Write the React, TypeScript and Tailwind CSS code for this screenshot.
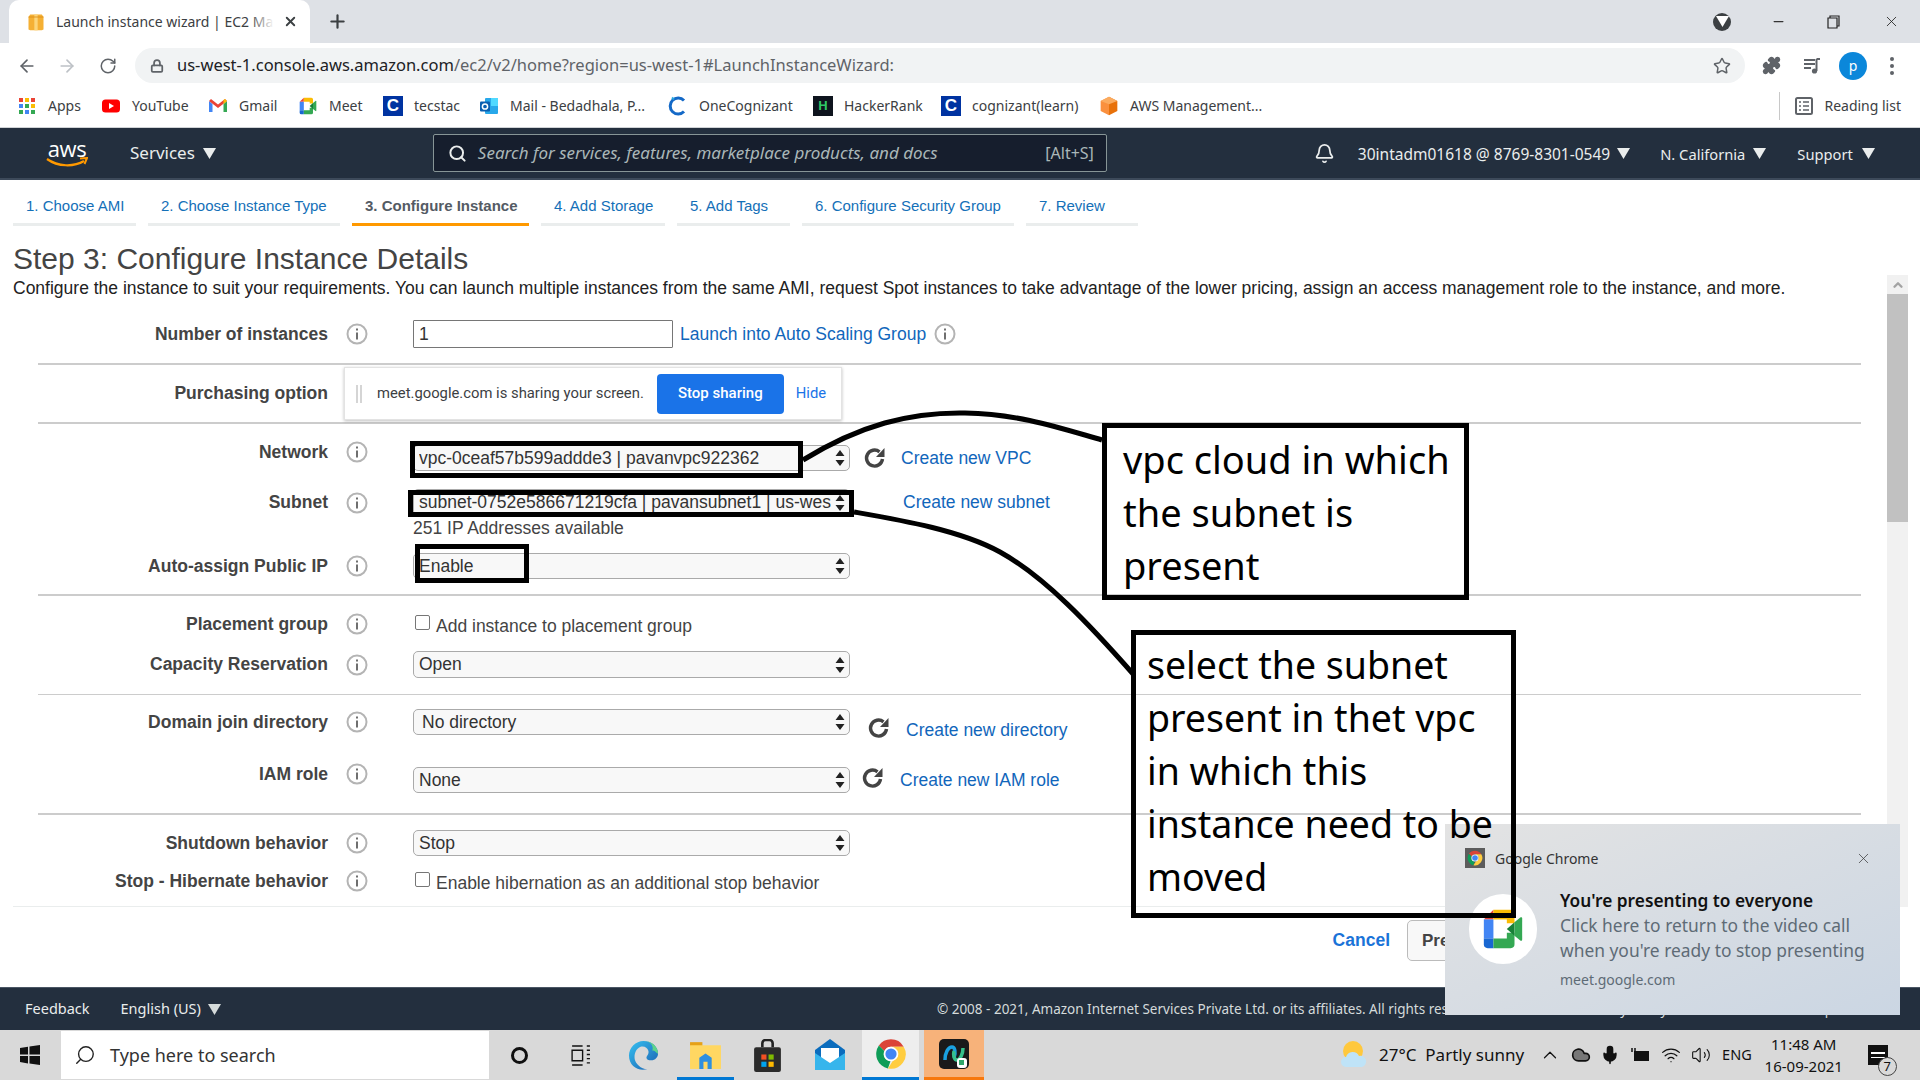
import React from 'react';
import { ArrowLeft, ArrowRight, ChevronUp, Lock, Plus, RotateCw, Search, Star, Puzzle, X, Bell, Mic, Volume2, Wifi, Cloud, Minus } from 'lucide-react';

const Tri = ({ className = '' }: { className?: string }) => (
  <svg viewBox="0 0 12 12" className={`w-[13px] h-[13px] shrink-0 ${className}`}>
    <path d="M0 1h12L6 11z" fill="currentColor" />
  </svg>
);

const ChromeLogo = ({ className = 'w-6 h-6' }: { className?: string }) => (
  <svg viewBox="0 0 24 24" className={className}>
    <path d="M12 1a11 11 0 0 1 9.5 5.5H12a5.5 5.5 0 0 0-5 3.2L2.9 5.7A11 11 0 0 1 12 1z" fill="#db4437" />
    <path d="M2.9 5.7 7 9.7a5.5 5.5 0 0 0 4.6 7.8l-1.9 5.3A11 11 0 0 1 2.9 5.7z" fill="#0f9d58" />
    <path d="M21.5 6.5A11 11 0 0 1 9.7 22.8l3.6-5.6A5.5 5.5 0 0 0 16.8 9.3l-4.8-2.8z" fill="#ffcd40" />
    <circle cx="12" cy="12" r="5.4" fill="#fff" />
    <circle cx="12" cy="12" r="4.2" fill="#4285f4" />
  </svg>
);

const MeetLogo = ({ className = 'w-5 h-5' }: { className?: string }) => (
  <svg viewBox="0 0 24 24" className={className}>
    <path d="M2 7 7 2v5z" fill="#ea4335" />
    <path d="M2 7h5v10H2z" fill="#4285f4" />
    <path d="M2 17h5v5H4a2 2 0 0 1-2-2z" fill="#1967d2" />
    <path d="M7 2h9a2 2 0 0 1 2 2v5l-4 0V7H7z" fill="#fbbc04" />
    <path d="M7 17h7v-3h4v6a2 2 0 0 1-2 2H7z" fill="#34a853" />
    <path d="m14 12 4-3.5v7z" fill="#188038" />
    <path d="m18 8.5 3-2.5c.6-.4 1-.1 1 .5v11c0 .6-.4.9-1 .5l-3-2.5z" fill="#34a853" />
  </svg>
);

const CBox = () => (
  <span className="w-5 h-5 bg-[#0033a1] flex items-center justify-center text-white font-bold text-[17px] leading-none font-['Liberation_Sans',sans-serif]">C</span>
);

const AwsCube = () => (
  <svg viewBox="0 0 24 24" className="w-5 h-5">
    <path d="M12 1 22 6v12l-10 5z" fill="#e8710a" />
    <path d="M12 1 2 6v12l10 5V10z" fill="#fa903e" />
    <path d="M2 6l10 4 10-4-10-5z" fill="#fbab5f" />
  </svg>
);

const Bookmark = ({ icon, text, w }: { icon: React.ReactNode; text: string; w: string }) => (
  <div className={`flex items-center gap-[11px] shrink-0 ${w}`}>
    <span className="w-5 h-5 flex items-center justify-center">{icon}</span>
    <span className="text-[14px] text-[#3c4043]">{text}</span>
  </div>
);

const Info = ({ className = '' }: { className?: string }) => (
  <svg viewBox="0 0 22 22" className={`w-[22px] h-[22px] shrink-0 ${className}`}>
    <circle cx="11" cy="11" r="9.5" fill="#fff" stroke="#b4b4b4" strokeWidth="2" />
    <rect x="10" y="9.5" width="2" height="7" fill="#6f6f6f" />
    <rect x="10" y="5.5" width="2" height="2" fill="#6f6f6f" />
  </svg>
);

const Select = ({ text, pad = 'pl-[5px]' }: { text: string; pad?: string }) => (
  <div className={`w-[437px] h-full shrink-0 flex items-center bg-[#f8f8f8] border border-[#aaaaaa] rounded-[5px] ${pad} pr-1 text-[17.500px] text-[#333] whitespace-nowrap`}>
    <span className="flex-1 overflow-hidden">{text}</span>
    <svg viewBox="0 0 10 16" className="w-[10px] h-4 shrink-0 ml-1">
      <path d="M5 0 9.5 6h-9zM5 16 .5 10h9z" fill="#222" />
    </svg>
  </div>
);

const Row = ({ label, h, mt, labelCls = '', children }: { label: string; h: string; mt: string; labelCls?: string; children: React.ReactNode }) => (
  <div className={`flex items-center ${h} ${mt}`}>
    <div className={`w-[290px] text-right font-bold text-[17.500px] text-[#444] shrink-0 ${labelCls}`}>{label}</div>
    <Info className={`ml-[18px] ${labelCls}`} />
    <div className="ml-[45px] flex items-center h-full">{children}</div>
  </div>
);

const Link = ({ children, className = '' }: { children: React.ReactNode; className?: string }) => (
  <span className={`text-[17.500px] text-[#1166bb] whitespace-nowrap ${className}`}>{children}</span>
);

const Refresh = ({ className = '' }: { className?: string }) => (
  <svg viewBox="0 0 24 24" className={`w-6 h-6 shrink-0 ${className}`}>
    <path d="M19.500 13a8 8 0 1 1-3-7.200" fill="none" stroke="#444" strokeWidth="3.400" />
    <path d="M21.500 2v9h-8.500z" fill="#444" />
  </svg>
);

const WizardTab = ({ text, w, active = false }: { text: string; w: string; active?: boolean }) => (
  <div className={`h-[46px] shrink-0 border-b-[3px] flex items-center pl-[13px] text-[15px] pt-[9px] ${w} ${active ? 'border-[#ff9900] text-[#545b64] font-bold' : 'border-[#eaeded] text-[#1470b8]'}`}>
    {text}
  </div>
);

const Checkbox = () => (
  <div className="ml-[2px] w-[15px] h-[15px] shrink-0 bg-white border border-[#767676] rounded-[2px] mb-[3px]" />
);

const App = () => {
  return (
    <div className="relative w-[1920px] h-[1080px] overflow-hidden bg-white flex flex-col font-['Liberation_Sans',Arial,sans-serif]">
      {/* Chrome tab strip */}
      <div className="h-[43px] shrink-0 bg-[#dee1e6] flex items-end font-['Noto_Sans',sans-serif]">
        <div className="ml-[9px] w-[301px] h-[43px] bg-white rounded-t-[10px] flex items-center pl-[17px] pr-3">
          <svg viewBox="0 0 24 24" className="w-[20px] h-[20px] shrink-0">
            <path d="M5 3h14l2 3v15l-2 1H5l-2-1V6z" fill="#f5b034" />
            <path d="M10 3h4v19h-4z" fill="#fcd57a" />
            <path d="M3 6h18" stroke="#d88d17" strokeWidth="1" />
          </svg>
          <span className="relative ml-[10px] w-[218px] whitespace-nowrap text-[14px] text-[#3c4043]">
            Launch instance wizard | EC2 Ma
            <span className="absolute right-0 top-0 w-[24px] h-full bg-gradient-to-r from-transparent to-white" />
          </span>
          <X size={15} strokeWidth={3} className="ml-auto text-[#3c4043]" />
        </div>
        <Plus size={21} strokeWidth={2.5} className="ml-[17px] mb-[11px] text-[#3c4043]" />
        <div className="ml-auto flex items-center h-[43px]">
          <div className="w-[18px] h-[18px] rounded-full bg-[#3c4043] text-white flex items-center justify-center mr-[40px]">
            <Tri className="w-[8px] h-[8px]" />
          </div>
          <Minus size={15} className="text-[#333] mr-[41px]" />
          <svg viewBox="0 0 14 14" className="w-[14px] h-[14px] mr-[42px]">
            <path d="M3 3V1h9v10h-2M1 3h9v10H1z" fill="none" stroke="#222" strokeWidth="1.2" />
          </svg>
          <X size={17} strokeWidth={1.2} className="text-[#222] mr-[20px]" />
        </div>
      </div>

      {/* Chrome toolbar */}
      <div className="h-[45px] shrink-0 bg-white flex items-center font-['Noto_Sans',sans-serif]">
        <ArrowLeft size={20} className="ml-[17px] text-[#5f6368]" />
        <ArrowRight size={20} className="ml-[20px] text-[#bdc1c6]" />
        <RotateCw size={18} className="ml-[22px] text-[#5f6368]" />
        <div className="ml-[18px] w-[1610px] h-[35px] rounded-full bg-[#f1f3f4] flex items-center pl-[15px] pr-[14px]">
          <Lock size={14} strokeWidth={3} className="text-[#5f6368]" />
          <span className="ml-[13px] text-[16.500px] text-[#202124]">us-west-1.console.aws.amazon.com<span className="text-[#5f6368]">/ec2/v2/home?region=us-west-1#LaunchInstanceWizard:</span></span>
          <Star size={18} className="ml-auto text-[#5f6368]" />
        </div>
        <Puzzle size={19} fill="#5f6368" className="ml-[17px] text-[#5f6368]" />
        <svg viewBox="0 0 20 20" className="w-5 h-5 ml-[21px]">
          <path d="M2 4h11M2 8h11M2 12h7" stroke="#5f6368" strokeWidth="2" />
          <path d="M14.5 3v12" stroke="#5f6368" strokeWidth="2" />
          <circle cx="12.5" cy="15" r="2.6" fill="#5f6368" />
          <path d="M14.5 3H18" stroke="#5f6368" strokeWidth="2" />
        </svg>
        <div className="ml-[17px] w-[28px] h-[28px] rounded-full bg-[#0b87da] text-white text-[14px] flex items-center justify-center">p</div>
        <div className="ml-[23px] flex flex-col gap-[3px]">
          <span className="w-[4px] h-[4px] rounded-full bg-[#5f6368]" />
          <span className="w-[4px] h-[4px] rounded-full bg-[#5f6368]" />
          <span className="w-[4px] h-[4px] rounded-full bg-[#5f6368]" />
        </div>
      </div>

      {/* Bookmarks bar */}
      <div className="h-[40px] shrink-0 bg-white border-b border-[#d0d3d6] flex items-center pl-[17px] pb-[4px] font-['Noto_Sans',sans-serif]">
        <Bookmark w="w-[84px]" text="Apps" icon={
          <svg viewBox="0 0 18 18" className="w-[18px] h-[18px]">
            <path d="M1 1h4v4H1z" fill="#ea4335" /><path d="M7 1h4v4H7z" fill="#fbbc04" /><path d="M13 1h4v4h-4z" fill="#ea4335" />
            <path d="M1 7h4v4H1z" fill="#4285f4" /><path d="M7 7h4v4H7z" fill="#34a853" /><path d="M13 7h4v4h-4z" fill="#fbbc04" />
            <path d="M1 13h4v4H1z" fill="#34a853" /><path d="M7 13h4v4H7z" fill="#4285f4" /><path d="M13 13h4v4h-4z" fill="#34a853" />
          </svg>
        } />
        <Bookmark w="w-[107px]" text="YouTube" icon={
          <svg viewBox="0 0 20 20" className="w-5 h-5">
            <rect x="1" y="3.5" width="18" height="13" rx="3.5" fill="#ff0000" />
            <path d="M8 7v6l5-3z" fill="#fff" />
          </svg>
        } />
        <Bookmark w="w-[90px]" text="Gmail" icon={
          <svg viewBox="0 0 20 20" className="w-5 h-5">
            <path d="M1 5v11h3.5V8z" fill="#4285f4" />
            <path d="M19 5v11h-3.5V8z" fill="#34a853" />
            <path d="M1 5l9 7 9-7-2-2-7 5.5L3 3z" fill="#ea4335" />
            <path d="M19 5l-3.500 3V4l1.500-1z" fill="#fbbc04" />
          </svg>
        } />
        <Bookmark w="w-[85px]" text="Meet" icon={<MeetLogo />} />
        <Bookmark w="w-[96px]" text="tecstac" icon={<CBox />} />
        <Bookmark w="w-[189px]" text="Mail - Bedadhala, P..." icon={
          <svg viewBox="0 0 20 20" className="w-5 h-5">
            <rect x="6" y="2" width="13" height="16" rx="1" fill="#28a8ea" />
            <rect x="12" y="2" width="7" height="8" fill="#50d9ff" />
            <rect x="1" y="5.500" width="10" height="10" rx="1" fill="#0a5fb0" />
            <circle cx="6" cy="10.500" r="2.600" fill="none" stroke="#fff" strokeWidth="1.500" />
          </svg>
        } />
        <Bookmark w="w-[145px]" text="OneCognizant" icon={
          <svg viewBox="0 0 20 20" className="w-5 h-5">
            <path d="M16 4.500A8 8 0 1 0 16 15.500" fill="none" stroke="#1469c7" strokeWidth="3" />
            <path d="M4 1.500l2 2" stroke="#27a7e0" strokeWidth="2" />
          </svg>
        } />
        <Bookmark w="w-[128px]" text="HackerRank" icon={
          <span className="w-5 h-5 bg-[#0e141e] flex items-center justify-center text-[#2ec866] font-bold text-[13px] leading-none font-['Liberation_Sans',sans-serif]">H</span>
        } />
        <Bookmark w="w-[158px]" text="cognizant(learn)" icon={<CBox />} />
        <Bookmark w="w-[200px]" text="AWS Management..." icon={<AwsCube />} />
        <div className="ml-auto flex items-center h-[28px] border-l border-[#c8c8c8] pl-[14px] pr-[19px]">
          <svg viewBox="0 0 20 20" className="w-5 h-5">
            <rect x="2" y="2" width="16" height="16" rx="1.500" fill="none" stroke="#5f6368" strokeWidth="2" />
            <path d="M5 6h2M9 6h6M5 10h2M9 10h6M5 14h2M9 14h6" stroke="#5f6368" strokeWidth="1.500" />
          </svg>
          <span className="ml-[10px] text-[14px] text-[#3c4043]">Reading list</span>
        </div>
      </div>

      {/* AWS nav */}
      <div className="h-[52px] shrink-0 bg-[#232f3e] border-b-2 border-[#3d4a5a] flex items-center text-[#eaeded] font-['Noto_Sans',sans-serif]">
        <div className="ml-[46px] w-[42px] flex flex-col items-center">
          <span className="text-[22px] leading-[18px] text-white font-['Open_Sans',sans-serif] tracking-[-0.5px]">aws</span>
          <svg viewBox="0 0 42 11" className="w-[42px] h-[11px]">
            <path d="M1 2c11 8 27 8 37 2" fill="none" stroke="#ff9900" strokeWidth="2.200" />
            <path d="M34 1.500l7-.5-2.500 6" fill="none" stroke="#ff9900" strokeWidth="2" />
          </svg>
        </div>
        <span className="ml-[42px] text-[17px]">Services</span>
        <Tri className="ml-[8px]" />
        <div className="ml-[217px] w-[674px] h-[38px] bg-[#161e2d] border border-[#879596] rounded-[2px] flex items-center pl-[14px] pr-3">
          <Search size={19} strokeWidth={2.5} className="text-[#eaeded]" />
          <span className="ml-[11px] text-[17px] italic text-[#aab7b8] whitespace-nowrap">Search for services, features, marketplace products, and docs</span>
          <span className="ml-auto text-[16px] text-[#aab7b8]">[Alt+S]</span>
        </div>
        <Bell size={21} className="ml-[207px]" />
        <span className="ml-[23px] mt-[3px] text-[15.500px]">30intadm01618 @ 8769-8301-0549</span>
        <Tri className="ml-[7px]" />
        <span className="ml-[30px] mt-[3px] text-[14.700px]">N. California</span>
        <Tri className="ml-[8px]" />
        <span className="ml-[31px] mt-[3px] text-[14.700px]">Support</span>
        <Tri className="ml-[9px]" />
      </div>

      {/* Page */}
      <div className="flex-1 flex flex-col min-h-0">
        <div className="flex gap-[12px] pl-[13px]">
          <WizardTab w="w-[123px]" text="1. Choose AMI" />
          <WizardTab w="w-[192px]" text="2. Choose Instance Type" />
          <WizardTab w="w-[177px]" text="3. Configure Instance" active />
          <WizardTab w="w-[124px]" text="4. Add Storage" />
          <WizardTab w="w-[113px]" text="5. Add Tags" />
          <WizardTab w="w-[212px]" text="6. Configure Security Group" />
          <WizardTab w="w-[112px]" text="7. Review" />
        </div>

        <div className="flex">
          <div className="w-[1887px] shrink-0">
            <h1 className="mt-[19px] pl-[13px] text-[30px] leading-[28px] text-[#444]">Step 3: Configure Instance Details</h1>
            <p className="mt-[5px] pl-[13px] text-[17.500px] leading-[20px] text-[#222] whitespace-nowrap">Configure the instance to suit your requirements. You can launch multiple instances from the same AMI, request Spot instances to take advantage of the lower pricing, assign an access management role to the instance, and more.</p>

            <div className="ml-[38px] w-[1823px] mt-[22px]">
              {/* count */}
              <div className="pb-[15px] border-b-2 border-[#cccccc]">
                <Row label="Number of instances" h="h-[28px]" mt="mt-0">
                  <div className="w-[260px] h-full border border-[#767676] rounded-[1px] flex items-center pl-[5px] text-[17.500px] text-[#333]">1</div>
                  <Link className="ml-[7px]">Launch into Auto Scaling Group</Link>
                  <Info className="ml-[8px]" />
                </Row>
              </div>

              {/* purchasing */}
              <div className="pt-[2px] pb-[2px] border-b-2 border-[#cccccc]">
                <Row label="Purchasing option" h="h-[53px]" mt="mt-0">
                  <div className="-ml-[69px] w-[498px] h-full bg-white border border-[#e3e3e3] shadow-[0_1px_3px_rgba(0,0,0,0.25)] flex items-center font-['Roboto',sans-serif]">
                    <span className="ml-[11px] w-[6px] h-[18px] border-l-2 border-r-2 border-[#d5d5d5]" />
                    <span className="ml-[15px] text-[14.800px] text-[#3c4043] whitespace-nowrap">meet.google.com is sharing your screen.</span>
                    <span className="ml-[13px] w-[127px] h-[40px] bg-[#1a73e8] rounded-[4px] text-white font-medium text-[15px] flex items-center justify-center">Stop sharing</span>
                    <span className="ml-[12px] text-[14.800px] text-[#1a73e8]">Hide</span>
                  </div>
                </Row>
              </div>

              {/* network */}
              <div className="pb-[15px] border-b-2 border-[#cccccc]">
                <Row label="Network" h="h-[26px]" mt="mt-[21px]" labelCls="mb-[12px]">
                  <Select text="vpc-0ceaf57b599addde3 | pavanvpc922362" />
                  <Refresh className="ml-[13px]" />
                  <Link className="ml-[14px]">Create new VPC</Link>
                </Row>
                <Row label="Subnet" h="h-[27px]" mt="mt-[18px]">
                  <Select text="subnet-0752e586671219cfa | pavansubnet1 | us-west-1a" />
                  <Link className="ml-[53px]">Create new subnet</Link>
                </Row>
                <div className="mt-[3px] h-[18px] pl-[375px] text-[17.500px] leading-[18px] text-[#444]">251 IP Addresses available</div>
                <Row label="Auto-assign Public IP" h="h-[26px]" mt="mt-[16px]">
                  <Select text="Enable" />
                </Row>
              </div>

              {/* placement */}
              <div className="pb-[16px] border-b border-[#cccccc]">
                <Row label="Placement group" h="h-[24px]" mt="mt-[16px]">
                  <Checkbox />
                  <span className="ml-[6px] mt-[4px] text-[17.500px] text-[#444] whitespace-nowrap">Add instance to placement group</span>
                </Row>
                <Row label="Capacity Reservation" h="h-[27px]" mt="mt-[15px]">
                  <Select text="Open" />
                </Row>
              </div>

              {/* directory and role */}
              <div className="pb-[20px] border-b-2 border-[#cccccc]">
                <Row label="Domain join directory" h="h-[26px]" mt="mt-[14px]">
                  <Select text="No directory" pad="pl-[8px]" />
                  <Refresh className="ml-[17px] mt-[12px]" />
                  <Link className="ml-[15px] mt-[16px]">Create new directory</Link>
                </Row>
                <Row label="IAM role" h="h-[26px]" mt="mt-[32px]" labelCls="mb-[12px]">
                  <Select text="None" />
                  <Refresh className="ml-[11px] mb-[4px]" />
                  <Link className="ml-[15px]">Create new IAM role</Link>
                </Row>
              </div>

              {/* shutdown */}
              <Row label="Shutdown behavior" h="h-[26px]" mt="mt-[15px]">
                <Select text="Stop" />
              </Row>
              <Row label="Stop - Hibernate behavior" h="h-[24px]" mt="mt-[13px]">
                <Checkbox />
                <span className="ml-[6px] mt-[4px] text-[17.500px] text-[#444] whitespace-nowrap">Enable hibernation as an additional stop behavior</span>
              </Row>
            </div>

            <div className="ml-[13px] mt-[13px] border-t border-[#eaeded]" />
          </div>

          {/* scrollbar */}
          <div className="w-[21px] h-[632px] mt-[49px] bg-[#f1f1f1] shrink-0 flex flex-col items-center">
            <ChevronUp size={14} strokeWidth={4} className="text-[#a3a3a3] mt-[3px]" />
            <div className="w-full h-[228px] mt-[2px] bg-[#c1c1c1]" />
          </div>
        </div>

        {/* actions */}
        <div className="mt-[13px] flex items-center pr-[20px] justify-end">
          <span className="text-[17.500px] font-bold text-[#1a73d8] mr-[17px]">Cancel</span>
          <div className="w-[493px] h-[41px] bg-[#f8f8f8] border border-[#bbbbbb] rounded-[5px] flex items-center pl-[14px] text-[17px] font-bold text-[#444]">Previous</div>
        </div>
      </div>

      {/* AWS footer */}
      <div className="h-[43px] shrink-0 bg-[#232f3e] border-t border-[#4a5664] flex items-center text-[14.500px] text-[#d5dbdb] font-['Noto_Sans',sans-serif]">
        <span className="ml-[25px] text-[#eaeded]">Feedback</span>
        <span className="ml-[31px] text-[#eaeded]">English (US)</span>
        <Tri className="ml-[7px]" />
        <span className="ml-[26px] w-[690px] shrink-0" />
        <span className="whitespace-nowrap text-[13.500px]">© 2008 - 2021, Amazon Internet Services Private Ltd. or its affiliates. All rights reserved.</span>
        <span className="ml-auto mr-[20px] whitespace-nowrap text-[13.500px]">Privacy Policy &nbsp;&nbsp; Terms of Use &nbsp;&nbsp; Cookie preferences</span>
      </div>

      {/* Windows taskbar */}
      <div className="h-[50px] shrink-0 bg-[#d9d9d9] flex items-center font-['Noto_Sans',sans-serif] text-[#111]">
        <svg viewBox="0 0 20 20" className="ml-[20px] w-[20px] h-[20px]">
          <path d="M0 3l8-1.200v7.700H0zM9.500 1.500 20 0v9.500H9.500zM0 11h8v7.500L0 17zM9.500 11H20v9L9.500 18.500z" fill="#111" />
        </svg>
        <div className="ml-[21px] w-[428px] h-[48px] bg-white flex items-center">
          <Search size={22} strokeWidth={1.500} className="ml-[13px] -scale-x-100 text-[#222]" />
          <span className="ml-[14px] text-[18px] text-[#333]">Type here to search</span>
        </div>
        <div className="ml-[22px] w-[17px] h-[17px] rounded-full border-[3px] border-[#111]" />
        <svg viewBox="0 0 20 20" className="ml-[42px] w-[21px] h-[21px]">
          <path d="M2 1h10M2 19h10M2 5h10v10H2z M16 1h3M16 5h3M16 9h3M16 13h3M16 17h3" fill="none" stroke="#111" strokeWidth="1.300" />
        </svg>
        <svg viewBox="0 0 32 32" className="ml-[37px] w-[31px] h-[31px]">
          <defs>
            <linearGradient id="edgeA" x1="0" y1="0" x2="1" y2="1"><stop offset="0" stopColor="#35c1f1" /><stop offset="1" stopColor="#1b5fb0" /></linearGradient>
          </defs>
          <path d="M16 1c9 0 15 6 15 13 0 4-3 7-7 7-3 0-5-1-5-3 0-2 3-3 2-7-1-3-4-5-8-4-5 2-7 8-6 13 1 4 6 10 13 10-9 3-19-3-19-14C1 8 8 1 16 1z" fill="url(#edgeA)" />
          <path d="M31 14c0-7-6-13-15-13 7 0 11 5 9 10 3-1 4 3 6 3z" fill="#5ed38b" />
        </svg>
        <div className="ml-[18px] w-[57px] h-[50px] border-b-[3px] border-[#0078d4] flex items-center justify-center">
          <svg viewBox="0 0 32 32" className="w-[33px] h-[33px]">
            <path d="M1 5h12v4H1z" fill="#e6a117" />
            <path d="M1 8h30v23H1z" fill="#ffd762" />
            <path d="M10 31V20l6-4 6 4v11h-4v-7h-4v7z" fill="#2d8fe0" />
          </svg>
        </div>
        <svg viewBox="0 0 32 32" className="ml-[17px] w-[33px] h-[33px]">
          <path d="M11 8V4a3 3 0 0 1 3-3h4a3 3 0 0 1 3 3v4" fill="none" stroke="#222" strokeWidth="2.500" />
          <rect x="3" y="8" width="26" height="24" rx="2" fill="#2b2b2b" />
          <path d="M10 15h5v5h-5z" fill="#f25022" /><path d="M17 15h5v5h-5z" fill="#7fba00" />
          <path d="M10 22h5v5h-5z" fill="#00a4ef" /><path d="M17 22h5v5h-5z" fill="#ffb900" />
        </svg>
        <svg viewBox="0 0 32 32" className="ml-[30px] w-[32px] h-[32px]">
          <path d="M16 0 31 11v20H1V11z" fill="#0a6cbd" />
          <path d="M7 9h18v11l-9 6-9-6z" fill="#fff" />
          <path d="M1 14l15 10 15-10v17H1z" fill="#36b5ec" />
        </svg>
        <div className="ml-[16px] w-[57px] h-[50px] bg-[#eeeeee] border-b-[3px] border-[#0078d4] flex items-center justify-center">
          <ChromeLogo className="w-[32px] h-[32px]" />
        </div>
        <div className="ml-[5px] w-[60px] h-[50px] bg-[#f7b27a] border-b-[3px] border-[#f7780d] flex items-center justify-center">
          <svg viewBox="0 0 32 32" className="w-[32px] h-[32px]">
            <rect x="1" y="1" width="30" height="30" rx="5" fill="#1a1a1a" />
            <path d="M7 22c0-7 3-13 7-13 3 0 4 6 2 11" fill="none" stroke="#1aa1e0" strokeWidth="3.500" />
            <path d="M25 10c0 6-3 12-6 12-3 0-4-5-3-9" fill="none" stroke="#36c18b" strokeWidth="3.500" />
            <rect x="19" y="20" width="10" height="10" rx="3" fill="#fff" />
            <rect x="21" y="22" width="5" height="5" fill="#2fa76a" />
          </svg>
        </div>
        <svg viewBox="0 0 30 30" className="ml-[355px] w-[30px] h-[30px] shrink-0">
          <circle cx="14" cy="11" r="10" fill="#ffc83d" />
          <path d="M7 27a5 5 0 0 1 0-10 7 7 0 0 1 13-1 5.500 5.500 0 0 1 3 11z" fill="#bfe3f7" />
        </svg>
        <span className="ml-[10px] text-[17px] whitespace-nowrap">27°C&nbsp; Partly sunny</span>
        <ChevronUp size={22} strokeWidth={1.300} className="ml-[15px]" />
        <Cloud size={20} fill="#777" className="ml-[10px]" />
        <Mic size={20} fill="#111" className="ml-[9px]" />
        <svg viewBox="0 0 20 20" className="ml-[11px] w-5 h-5">
          <rect x="3" y="6" width="15" height="10" fill="#111" />
          <path d="M1 3v4M4 3v4" stroke="#111" strokeWidth="1.500" />
        </svg>
        <Wifi size={20} strokeWidth={1.500} className="ml-[10px]" />
        <Volume2 size={20} strokeWidth={1.300} className="ml-[10px]" />
        <span className="ml-[11px] text-[14.500px]">ENG</span>
        <div className="ml-[14px] w-[76px] shrink-0 flex flex-col items-center text-[15px] leading-[22px] whitespace-nowrap">
          <span>11:48 AM</span>
          <span>16-09-2021</span>
        </div>
        <div className="relative ml-[26px] w-[20px] h-[20px] bg-[#111] flex flex-col justify-center gap-[3px] px-[3px]">
          <span className="h-[1.500px] bg-white" />
          <span className="h-[1.500px] bg-white" />
          <span className="absolute -right-[9px] -bottom-[11px] w-[19px] h-[19px] rounded-full border border-[#444] bg-[#d9d9d9] text-[13px] leading-[17px] text-center">7</span>
        </div>
      </div>

      {/* Chrome notification */}
      <div className="absolute left-[1445px] top-[824px] w-[455px] h-[191px] z-20 bg-gradient-to-br from-[#e3e3e3] to-[#cbd6e3] font-['Noto_Sans',sans-serif]">
        <div className="flex items-center h-[20px] mt-[24px] pl-[20px] pr-[28px]">
          <div className="w-[20px] h-[20px] bg-[#5c5c5c] flex items-center justify-center">
            <ChromeLogo className="w-[16px] h-[16px]" />
          </div>
          <span className="ml-[10px] text-[14px] text-[#333]">Google Chrome</span>
          <X size={17} strokeWidth={1} className="ml-auto text-[#333]" />
        </div>
        <div className="flex mt-[21px] pl-[24px]">
          <div className="w-[68px] h-[70px] mt-[5px] rounded-full bg-white shrink-0 flex items-center justify-center">
            <MeetLogo className="w-[46px] h-[46px]" />
          </div>
          <div className="ml-[23px]">
            <div className="text-[17.300px] leading-[24px] font-semibold text-[#111] whitespace-nowrap">You're presenting to everyone</div>
            <div className="text-[17.400px] leading-[25px] text-[#5e6b76] whitespace-nowrap">Click here to return to the video call</div>
            <div className="text-[17.400px] leading-[25px] text-[#5e6b76] whitespace-nowrap">when you're ready to stop presenting</div>
            <div className="mt-[7px] text-[14px] leading-[20px] text-[#5e6b76]">meet.google.com</div>
          </div>
        </div>
      </div>

      {/* Hand-drawn annotations on top of the screenshot */}
      <svg className="absolute inset-0 z-30 pointer-events-none" width="1920" height="1080" viewBox="0 0 1920 1080">
        <path d="M803 460C860 425 910 412 965 413C1020 414 1060 428 1102 440" fill="none" stroke="#000" strokeWidth="5" />
        <path d="M854 512C900 520 960 530 1000 552C1045 577 1090 625 1134 675" fill="none" stroke="#000" strokeWidth="5" />
      </svg>
      <div className="absolute z-30 left-[410px] top-[441px] w-[393px] h-[37px] border-[5px] border-black" />
      <div className="absolute z-30 left-[408px] top-[490px] w-[446px] h-[27px] border-[5px] border-black" />
      <div className="absolute z-30 left-[415px] top-[544px] w-[114px] h-[39px] border-[5px] border-black" />
      <div className="absolute z-30 left-[1102px] top-[423px] w-[367px] h-[177px] border-[5px] border-black pl-[16px] pt-[5px] text-[38px] leading-[53px] text-black font-['Noto_Sans',sans-serif]">
        vpc cloud in which<br />the subnet is<br />present
      </div>
      <div className="absolute z-30 left-[1131px] top-[630px] w-[385px] h-[288px] border-[5px] border-black pl-[11px] pt-[3px] text-[37.500px] leading-[53px] text-black whitespace-nowrap font-['Noto_Sans',sans-serif]">
        select the subnet<br />present in thet vpc<br />in which this<br />instance need to be<br />moved
      </div>
    </div>
  );
};

export default App;
